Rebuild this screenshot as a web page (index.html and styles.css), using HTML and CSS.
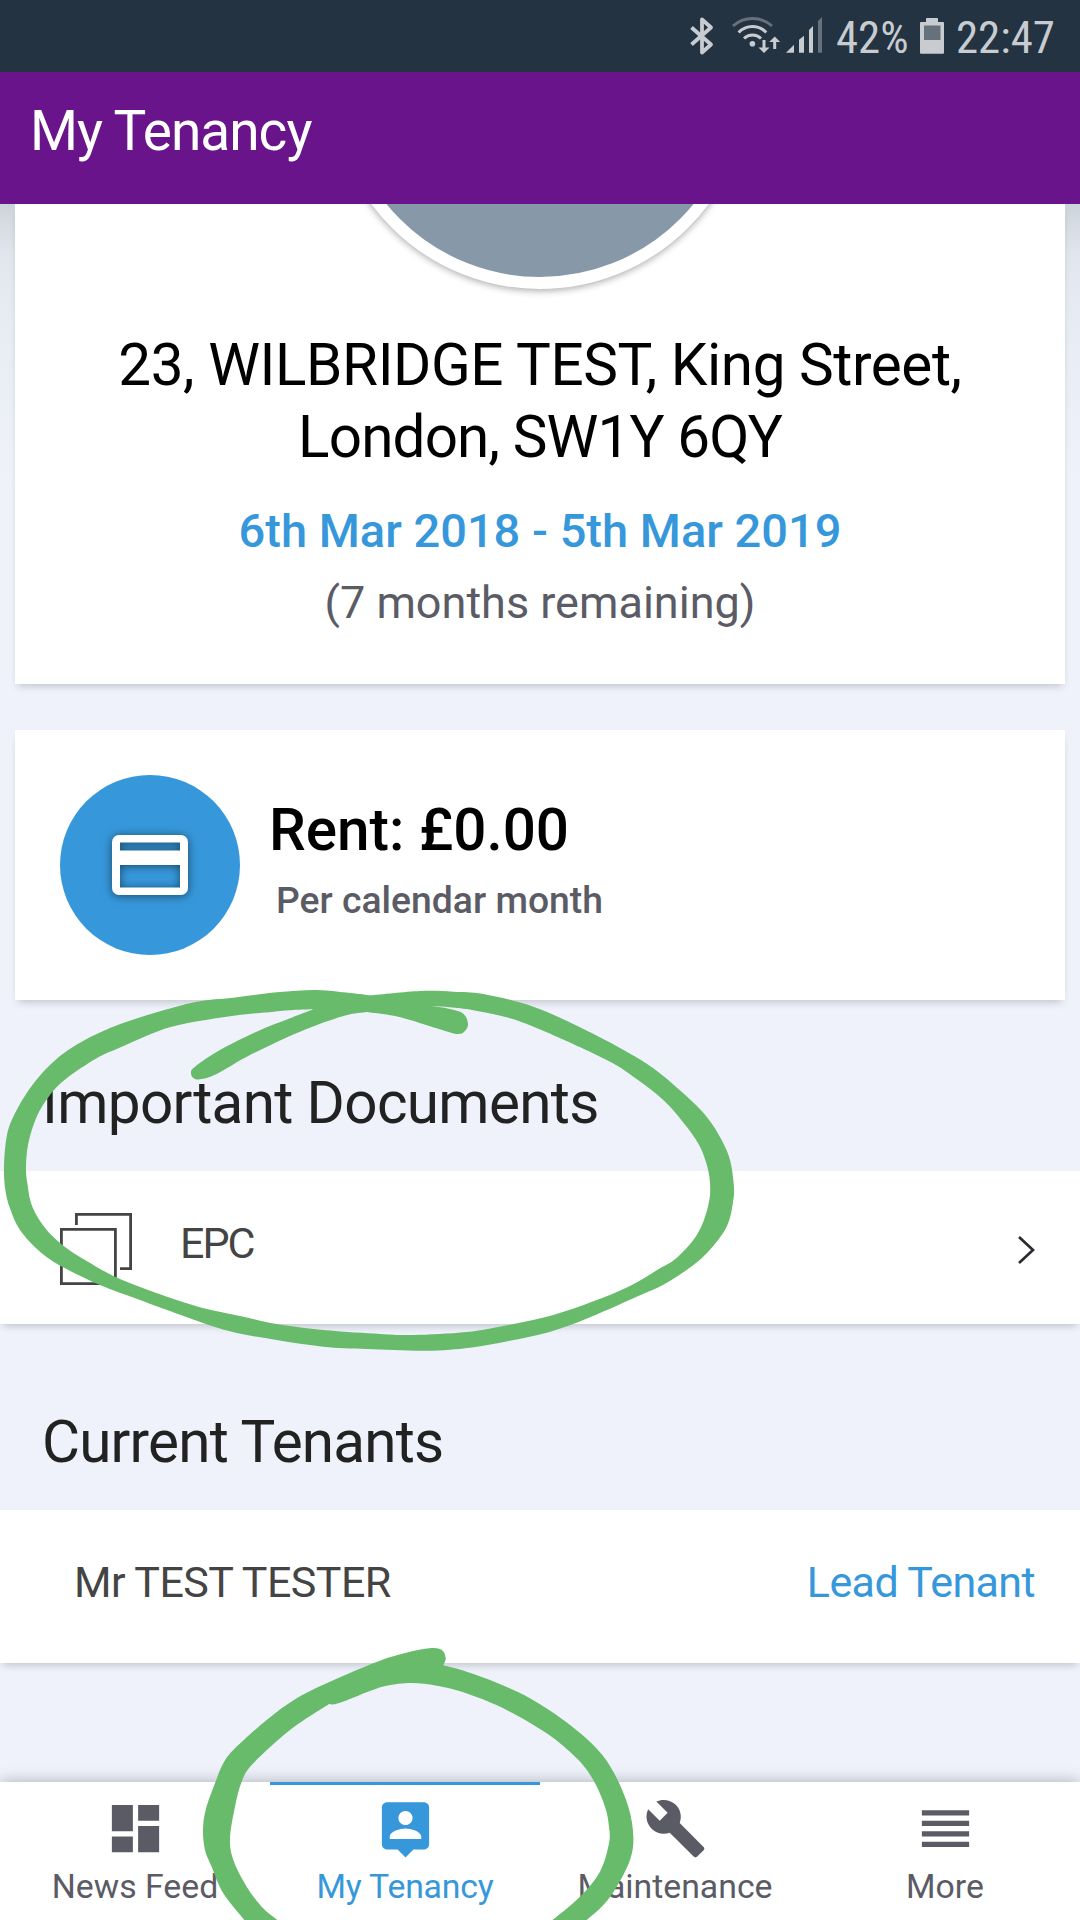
FILE: index.html
```
<!DOCTYPE html>
<html lang="en">
<head>
<meta charset="utf-8">
<title>My Tenancy</title>
<link rel="stylesheet" href="styles.css">
</head>
<body>
<div class="app">
  <div class="status">
    <svg class="status-bluetooth" viewBox="690 0 24 72"><path d="M691.5 27.5 711 44.5 702 52.5V19.5L711 27.5 691.5 44.5" fill="none" stroke="currentColor" stroke-width="3.8" stroke-linejoin="round"/></svg>
    <svg class="status-wifi" viewBox="730 0 52 72">
      <g fill="none" stroke="currentColor" stroke-width="3">
        <path class="dim" d="M733 26A29 29 0 0 1 772 26"/>
        <path d="M738.6 32.5A18.8 18.8 0 0 1 766.2 32.5M744 38.5A12 12 0 0 1 761 38.5"/>
        <path d="M764 40V50M774.7 39V49"/>
      </g>
      <circle cx="752.4" cy="43.7" r="2.8" fill="currentColor"/>
      <path d="M758.5 47.500H769.500L764 53ZM769.200 42H780.200L774.700 36.500Z" fill="currentColor"/>
    </svg>
    <svg class="status-signal" viewBox="786 0 36 72"><path d="M786 52.800 794 44.800V52.800ZM799 52.800V39.700L804 35.700V52.800ZM809 52.800V30L813 26V52.800Z" fill="currentColor"/><path class="dim-fill" d="M818 52.800V21L822 17V52.800Z"/></svg>
    <span class="status-percent">42%</span>
    <svg class="status-battery" viewBox="920 0 24 72"><path d="M926 22V19a1 1 0 0 1 1-1H937a1 1 0 0 1 1 1V22H943a1 1 0 0 1 1 1V52.700a1 1 0 0 1-1 1H921a1 1 0 0 1-1-1V23a1 1 0 0 1 1-1Z" fill="currentColor"/><path class="dim-fill" d="M924 25.500H940.500V40H924Z"/></svg>
    <span class="status-time">22:47</span>
  </div>

  <header class="header"><h1>My Tenancy</h1></header>

  <main class="content">
    <section class="card property">
      <div class="avatar"></div>
      <h2 class="address">23, WILBRIDGE TEST, King Street,<br><span class="address-city">London, SW1Y 6QY</span></h2>
      <p class="dates">6th Mar 2018 - 5th Mar 2019</p>
      <p class="remaining">(7 months remaining)</p>
    </section>

    <section class="card rent">
      <div class="rent-icon">
        <svg viewBox="0 0 76 60"><path fill="#fff" fill-rule="evenodd" d="M7 0H69a7 7 0 0 1 7 7V53a7 7 0 0 1-7 7H7a7 7 0 0 1-7-7V7a7 7 0 0 1 7-7ZM8 7.500V15.500H68V7.500ZM8 30V52.500H68V30Z"/></svg>
      </div>
      <div class="rent-text">
        <div class="rent-amount">Rent: £0.00</div>
        <div class="rent-period">Per calendar month</div>
      </div>
    </section>

    <h3 class="section-title documents-title">Important Documents</h3>
    <div class="row document">
      <svg class="document-icon" viewBox="0 0 72 72"><path d="M16.400 12V1.400H70.600V55.600H60M1.400 16.400H55.400V70.600H1.400Z" fill="none" stroke="currentColor" stroke-width="2.800"/></svg>
      <span class="document-name">EPC</span>
      <svg class="chevron" viewBox="0 0 18 30"><path d="M2 2 16 15 2 28" fill="none" stroke="#2b2a33" stroke-width="2.700"/></svg>
    </div>

    <h3 class="section-title tenants-title">Current Tenants</h3>
    <div class="row tenant">
      <span class="tenant-name">Mr TEST TESTER</span>
      <span class="tenant-role">Lead Tenant</span>
    </div>
  </main>

  <nav class="tabs">
    <a class="tab">
      <svg viewBox="0 0 24 24"><path d="M3 13h8V3H3v10zm0 8h8v-6H3v6zm10 0h8V11h-8v10zm0-18v6h8V3h-8z"/></svg>
      <span>News Feed</span>
    </a>
    <a class="tab active">
      <svg viewBox="0 0 24 24"><path d="M19 2H5c-1.110 0-2 .9-2 2v14c0 1.100.890 2 2 2h4l3 3 3-3h4c1.100 0 2-.9 2-2V4c0-1.100-.9-2-2-2zm-7 3.300c1.490 0 2.700 1.210 2.700 2.700s-1.210 2.700-2.700 2.700S9.300 9.490 9.300 8s1.210-2.700 2.700-2.700zM18 16H6v-.9c0-2 4-3.100 6-3.100s6 1.100 6 3.100v.9z"/></svg>
      <span>My Tenancy</span>
    </a>
    <a class="tab">
      <svg viewBox="0 0 24 24"><path d="M22.700 19l-9.100-9.100c.9-2.300.4-5-1.500-6.900-2-2-5-2.400-7.400-1.300L9 6 6 9 1.600 4.700C.4 7.100.9 10.100 2.900 12.100c1.900 1.900 4.600 2.400 6.900 1.500l9.100 9.100c.4.4 1 .4 1.400 0l2.300-2.300c.5-.4.5-1.100.1-1.400z"/></svg>
      <span>Maintenance</span>
    </a>
    <a class="tab">
      <svg viewBox="0 0 24 24"><path d="M3 5h18v2H3zM3 9h18v2H3zM3 13h18v2H3zM3 17h18v2H3z"/></svg>
      <span>More</span>
    </a>
  </nav>

  <svg class="ink" viewBox="0 0 1080 1920">
    <path id="ink-documents" fill-rule="evenodd" transform="translate(0 970) scale(.33333)"/>
    <path id="ink-tab" transform="translate(180 1620) scale(.33333)"/>
  </svg>
</div>
<script src="ink.js"></script>
</body>
</html>
```
FILE: styles.css
```
* {
  box-sizing: border-box;
  margin: 0;
  padding: 0;
}

body {
  font-family: Roboto, "Liberation Sans", sans-serif;
  font-weight: 400;
  background: #eff2fb;
}

svg {
  display: block;
  flex: none;
}

.app {
  position: relative;
  display: flex;
  flex-direction: column;
  width: 1080px;
  height: 1920px;
  overflow: hidden;
}

/* Status bar */
.status {
  display: flex;
  flex: none;
  height: 72px;
  padding-left: 690px;
  background: #233341;
  color: #c8ccd1;
  font-family: "Roboto Condensed", Roboto, sans-serif;
  font-size: 44.8px;
  line-height: 75px;
  white-space: nowrap;
}

.status svg { height: 72px; }
.status-bluetooth { width: 24px; margin-right: 16px; }
.status-wifi { width: 52px; margin-right: 4px; }
.status-signal { width: 36px; margin-right: 14px; }
.status-percent { width: 84px; }
.status-battery { width: 24px; margin-right: 12px; }
.dim { stroke: #66717c; }
.dim-fill { fill: #66717c; }

/* Header */
.header {
  display: flex;
  flex: none;
  align-items: center;
  height: 132px;
  padding: 0 30px 14px;
  background: #69148b;
  color: #fff;
}

.header h1 {
  font-size: 55px;
  font-weight: 400;
  letter-spacing: -1px;
}

/* Content */
.content {
  flex: 1;
  min-height: 0;
  overflow: hidden;
  background: linear-gradient(#cbd3da 0, #d5dbe3 18px, #e1e6ee 50px, #e7ebf4 110px, #eff2fb 280px);
}

.card {
  margin: 0 15px;
  background: #fff;
  box-shadow: 0 5px 8px -3px rgba(0, 0, 0, .2);
}

.property {
  display: flex;
  flex-direction: column;
  align-items: center;
  height: 480px;
  overflow: hidden;
  text-align: center;
  line-height: 72px;
}

.avatar {
  flex: none;
  width: 420px;
  height: 420px;
  margin-top: -335px;
  border: 12px solid #fff;
  border-radius: 50%;
  background: #8798a8;
  box-shadow: 0 2px 7px rgba(0, 0, 0, .32);
}

.address {
  margin-top: 40px;
  color: #000;
  font-size: 58.4px;
  font-weight: 400;
  letter-spacing: -.42px;
  white-space: nowrap;
}

.address-city { letter-spacing: -.85px; }

.dates {
  margin-top: 22px;
  color: #3698db;
  font-size: 47px;
  font-weight: 500;
}

.remaining {
  color: #5b5b66;
  font-size: 45px;
}

.rent {
  display: flex;
  align-items: center;
  gap: 29px;
  height: 270px;
  margin-top: 46px;
  padding-left: 45px;
}

.rent-icon {
  display: flex;
  align-items: center;
  justify-content: center;
  width: 180px;
  height: 180px;
  border-radius: 50%;
  background: #3698db;
}

.rent-icon svg {
  width: 76px;
  height: 60px;
  overflow: visible;
  filter: drop-shadow(0 1px 5px rgba(0, 0, 0, .55));
}

.rent-text {
  font-weight: 500;
  line-height: 70px;
}

.rent-amount {
  color: #000;
  font-size: 58.4px;
}

.rent-period {
  padding-left: 7px;
  color: #5b5b66;
  font-size: 37.3px;
}

.section-title {
  padding-left: 42px;
  margin-bottom: 33px;
  color: #222;
  font-size: 58.4px;
  font-weight: 400;
  line-height: 70px;
}

.documents-title {
  margin-top: 68px;
  letter-spacing: -.65px;
}

.tenants-title {
  margin-top: 83px;
  letter-spacing: -.8px;
}

.row {
  display: flex;
  align-items: center;
  height: 153px;
  padding-right: 45px;
  background: #fff;
  box-shadow: 0 5px 8px -3px rgba(0, 0, 0, .2);
  color: #444;
  font-size: 43px;
}

.document { padding-left: 60px; }

.document-icon {
  width: 72px;
  height: 72px;
  margin: 3px 48px 0 0;
}

.document-name {
  padding-bottom: 9px;
  letter-spacing: -2px;
}

.chevron {
  width: 18px;
  height: 30px;
  margin: 5px 0 0 auto;
}

.tenant {
  justify-content: space-between;
  padding-bottom: 9px;
  padding-left: 74px;
}

.tenant-name { letter-spacing: -.55px; }

.tenant-role {
  color: #3698db;
  letter-spacing: -.6px;
}

/* Tab bar */
.tabs {
  position: relative;
  display: grid;
  flex: none;
  grid-template-columns: repeat(4, 1fr);
  height: 138px;
  background: #fff;
  box-shadow: 0 0 15px rgba(0, 0, 0, .28);
}

.tab {
  display: flex;
  flex-direction: column;
  align-items: center;
  padding-top: 12px;
  border-top: 3px solid transparent;
  color: #5b5b66;
  font-size: 33.8px;
  line-height: 54px;
}

.tab svg {
  width: 63px;
  height: 63px;
  fill: currentColor;
}

.tab.active {
  border-top-color: #3698db;
  color: #3698db;
  letter-spacing: -.2px;
}

/* Freehand marks drawn over the screen */
.ink {
  position: absolute;
  inset: 0;
  width: 1080px;
  height: 1920px;
  fill: #67bb6b;
  pointer-events: none;
}
```
FILE: ink.js
```
// Turns a list of outline points into a smooth run of Bezier segments.
function smooth(points, closed) {
  const n = points.length;
  const at = i => closed ? points[(i + n) % n] : points[Math.max(0, Math.min(n - 1, i))];
  let d = '';
  for (let i = 0; i < (closed ? n : n - 1); i++) {
    const [a, b, c, e] = [at(i - 1), at(i), at(i + 1), at(i + 2)];
    d += `C${b[0] + (c[0] - a[0]) / 6} ${b[1] + (c[1] - a[1]) / 6} ` +
         `${c[0] - (e[0] - b[0]) / 6} ${c[1] - (e[1] - b[1]) / 6} ${c[0]} ${c[1]}`;
  }
  return d;
}

// Each run is smooth; neighbouring runs meet in a corner.
function outline(...runs) {
  return `M${runs[0][0].join(' ')}` + runs.map(r => smooth(r, false)).join('') + 'Z';
}

document.getElementById('ink-documents').setAttribute('d',
  outline(
    [[1112,76],[1050,69],[950,60],[830,67],[700,83],[590,95],[460,130],[330,174],[220,230],[150,285],[90,355],[40,440],[20,500],[12,590],[16,660],[30,715],[60,780],[120,845],[190,892],[300,945],[420,990],[540,1034],[690,1084],[830,1110],[970,1130],[1100,1137],[1280,1142],[1410,1133],[1530,1112],[1640,1088],[1750,1050],[1910,980],[1990,944],[2060,900],[2120,850],[2180,770],[2200,690],[2201,640],[2190,570],[2165,510],[2120,440],[2050,370],[1960,295],[1880,245],[1740,172],[1600,110],[1450,72],[1360,65],[1260,63],[1112,76]]
  ) +
  outline(
    [[940,118],[880,120],[820,125],[680,140],[560,160],[470,185],[355,235],[290,265],[200,325],[150,375],[110,440],[85,520],[78,590],[82,640],[97,710],[140,780],[200,835],[260,873],[340,918],[430,955],[530,990],[620,1017],[720,1038],[830,1062],[980,1081],[1140,1092],[1240,1095],[1400,1086],[1530,1064],[1660,1035],[1780,994],[1890,948],[1980,895],[2025,868],[2080,810],[2110,755],[2128,690],[2130,640],[2122,590],[2100,530],[2060,470],[1990,390],[1900,320],[1820,270],[1640,187],[1530,145],[1420,121],[1350,112],[1296,109]],
    [[1296,109],[1340,115],[1388,130],[1404,160],[1395,183],[1370,192],[1310,175],[1230,150],[1180,137],[1100,126]],
    [[1100,126],[1030,138],[900,185],[750,255],[650,312],[600,328],[580,324],[573,308],[585,290],[660,240],[770,185],[870,145],[940,118]]
  ));

document.getElementById('ink-tab').setAttribute('d',
  outline(
    [[215,930],[193,900],[130,820],[95,740],[75,690],[69,630],[77,570],[105,490],[130,430],[165,385],[260,300],[350,235],[450,185],[600,122],[700,93],[760,84],[788,92],[797,115],[790,136]],
    [[790,136],[860,155],[950,188],[1050,235],[1150,300],[1245,380],[1300,455],[1345,560],[1360,650],[1350,720],[1310,800],[1270,855],[1220,900],[1190,922]],
    [[1190,922],[1080,925]],
    [[1080,925],[1117,900],[1200,830],[1260,755],[1287,670],[1287,620],[1275,560],[1240,480],[1190,415],[1100,340],[970,265],[850,217],[770,197],[695,189],[620,197],[570,213],[475,250],[447,252]],
    [[447,252],[330,330],[220,430],[185,485],[165,560],[150,655],[160,720],[200,800],[245,860],[292,900],[320,922]]
  ));
```
